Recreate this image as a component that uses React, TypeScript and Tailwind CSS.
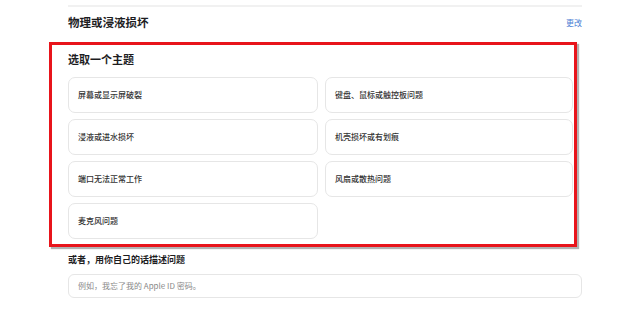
import React from 'react';

const topics = [
  '屏幕或显示屏破裂',
  '键盘、鼠标或触控板问题',
  '浸液或进水损坏',
  '机壳损坏或有划痕',
  '端口无法正常工作',
  '风扇或散热问题',
  '麦克风问题',
];

const font = "font-['Noto_Sans_CJK_SC','Noto_Sans',sans-serif]";

const App: React.FC = () => {
  return (
    <div className={`w-[620px] h-[309px] bg-white overflow-hidden text-[#1d1d1f] ${font}`}>
      <div className="ml-[68px] w-[514px]">
        <div className="mt-[5px] h-[2px] bg-[#f1f1f1]" />
        <div className="mt-[7px] h-[16px] flex items-center justify-between">
          <span className="text-[11.5px] leading-[16px] font-semibold">物理或浸液损坏</span>
          <span className="text-[8px] leading-[16px] text-[#4b7fd4] mt-[2px]">更改</span>
        </div>
      </div>

      <div className="mt-[12px] ml-[49px] w-[528px] h-[205px] border-[3px] border-[#e8141b] shadow-[2px_2px_1px_rgba(0,0,0,0.3)] pl-[16px] pt-[6px]">
        <h2 className="text-[11px] leading-[16px] font-semibold">选取一个主题</h2>
        <div className="mt-[10px] grid grid-cols-[250px_248px] gap-x-[7px] gap-y-[6px]">
          {topics.map((t) => (
            <div
              key={t}
              className="h-[36px] rounded-[7px] border border-[#e6e6e6] flex items-center pl-[9px] text-[8px] font-medium text-[#333]"
            >
              {t}
            </div>
          ))}
        </div>
      </div>

      <div className="ml-[68px] w-[514px]">
        <div className="mt-[6px] h-[14px] text-[9px] leading-[14px] font-semibold">或者，用你自己的话描述问题</div>
        <div className="mt-[7px] h-[24px] rounded-[6px] border border-[#e6e6e6] flex items-center pl-[9px] text-[8px] text-[#888]">
          例如，我忘了我的 Apple ID 密码。
        </div>
      </div>
    </div>
  );
};

export default App;
